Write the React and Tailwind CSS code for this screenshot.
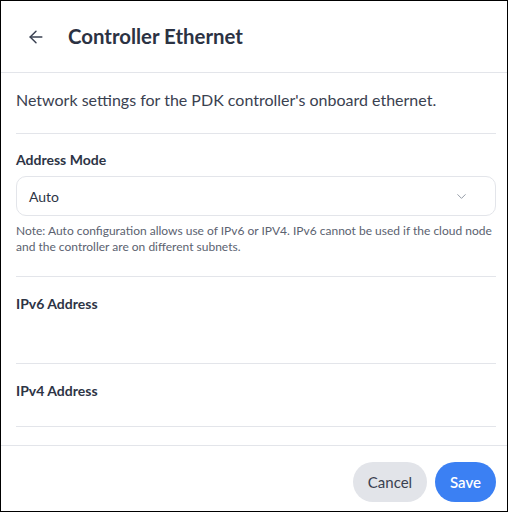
import React from 'react';
import { ArrowLeft, ChevronDown } from 'lucide-react';

const Section = ({ label, className = '' }) => (
  <div className={`border-b border-[#e3e5ea] ${className}`}>
    <div className="text-[14px] leading-5 font-bold text-[#2d3445]">{label}</div>
  </div>
);

export default function App() {
  return (
    <div
      className="w-[508px] h-[512px] bg-white border border-black flex flex-col overflow-hidden"
      style={{ fontFamily: 'Lato, "Open Sans", sans-serif' }}
    >
      {/* Header */}
      <div className="h-[72px] shrink-0 flex items-center border-b border-[#e3e5ea] pl-[25px]">
        <ArrowLeft size={20} strokeWidth={1.75} className="text-[#3a4152]" />
        <h1 className="ml-[22px] text-[20.4px] font-bold text-[#2b3243]">Controller Ethernet</h1>
      </div>

      {/* Body */}
      <div className="flex-1 overflow-hidden pl-[15px] pr-[11px]">
        <p className="pt-[15px] pb-[21px] text-[16px] leading-6 text-[#3a4150] border-b border-[#e3e5ea]">
          Network settings for the PDK controller's onboard ethernet.
        </p>

        <div className="pt-[16px] pb-[21px] border-b border-[#e3e5ea]">
          <div className="text-[14px] leading-5 font-bold text-[#2d3445]">Address Mode</div>
          <div className="mt-[6px] h-[40px] rounded-[10px] border border-[#e3e5ea] flex items-center justify-between pl-[12px] pr-[26px]">
            <span className="text-[14px] text-[#2d3445]">Auto</span>
            <ChevronDown size={15} strokeWidth={1.5} className="text-[#8d94a0]" />
          </div>
          <p className="mt-[7px] text-[12px] leading-4 text-[#5b6270]">
            Note: Auto configuration allows use of IPv6 or IPV4. IPv6 cannot be used if the cloud node and the controller are on different subnets.
          </p>
        </div>

        <Section label="IPv6 Address" className="pt-[17px] h-[87px]" />
        <Section label="IPv4 Address" className="pt-[17px] h-[63px]" />
      </div>

      {/* Footer */}
      <div className="shrink-0 h-[66px] border-t border-[#e3e5ea] flex justify-end items-start gap-2 pt-[16px] pr-[11px]">
        <button className="w-[74px] h-[40px] rounded-full bg-[#e2e4e9] text-[15px] text-[#3a4150]">
          Cancel
        </button>
        <button className="w-[61px] h-[40px] rounded-full bg-[#3b80f3] text-[15px] font-semibold text-white">
          Save
        </button>
      </div>
    </div>
  );
}
